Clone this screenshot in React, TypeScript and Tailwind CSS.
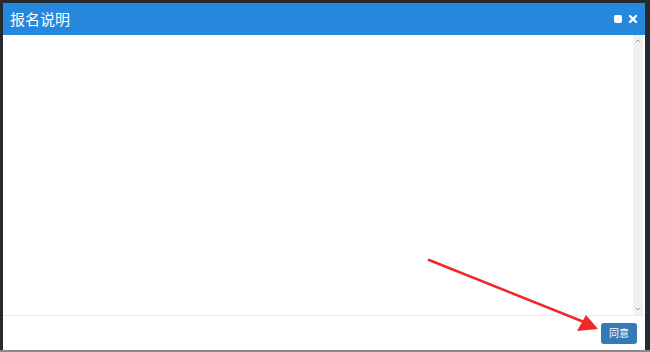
import { ChevronUp, ChevronDown, X } from "lucide-react";

export default function App() {
  return (
    <div
      className="relative w-[650px] h-[352px] overflow-hidden bg-[#262a2e] pt-[3px] pl-[3px] pr-[5px] border-b-[2px] border-[#8a8a8a]"
      style={{ fontFamily: '"Noto Sans", "Noto Sans CJK SC", sans-serif' }}
    >
      <div className="flex h-full flex-col bg-white">
        <div className="flex h-[32px] shrink-0 items-center justify-between bg-[#2688dc] pl-[7px] pr-[6px]">
          <span className="text-[15px] leading-none text-white">报名说明</span>
          <div className="flex items-center gap-[5px]">
            <span className="block h-[8px] w-[8px] rounded-[2px] bg-white" />
            <X className="h-[12px] w-[12px] text-white" strokeWidth={4.5} />
          </div>
        </div>
        <div className="flex min-h-0 flex-1">
          <div className="flex-1" />
          <div className="mr-[2px] flex w-[10px] flex-col items-center justify-between bg-[#f1f1f1] py-[2px]">
            <ChevronUp className="h-[8px] w-[8px] text-[#a3a3a3]" strokeWidth={3} />
            <ChevronDown className="h-[8px] w-[8px] text-[#a3a3a3]" strokeWidth={3} />
          </div>
        </div>
        <div className="flex h-[35px] shrink-0 items-center justify-end border-t border-[#ececec] pr-[8px]">
          <button className="h-[21px] rounded-[3px] bg-[#337ab7] px-[8px] text-[10px] leading-none text-white">
            同意
          </button>
        </div>
      </div>
      <svg className="absolute left-0 top-0" width="650" height="352">
        <line x1="429" y1="260" x2="584" y2="322" stroke="#f0282a" strokeWidth="2.6" strokeLinecap="round" />
        <polygon points="598,329 577,331 586,315" fill="#f0282a" />
      </svg>
    </div>
  );
}
